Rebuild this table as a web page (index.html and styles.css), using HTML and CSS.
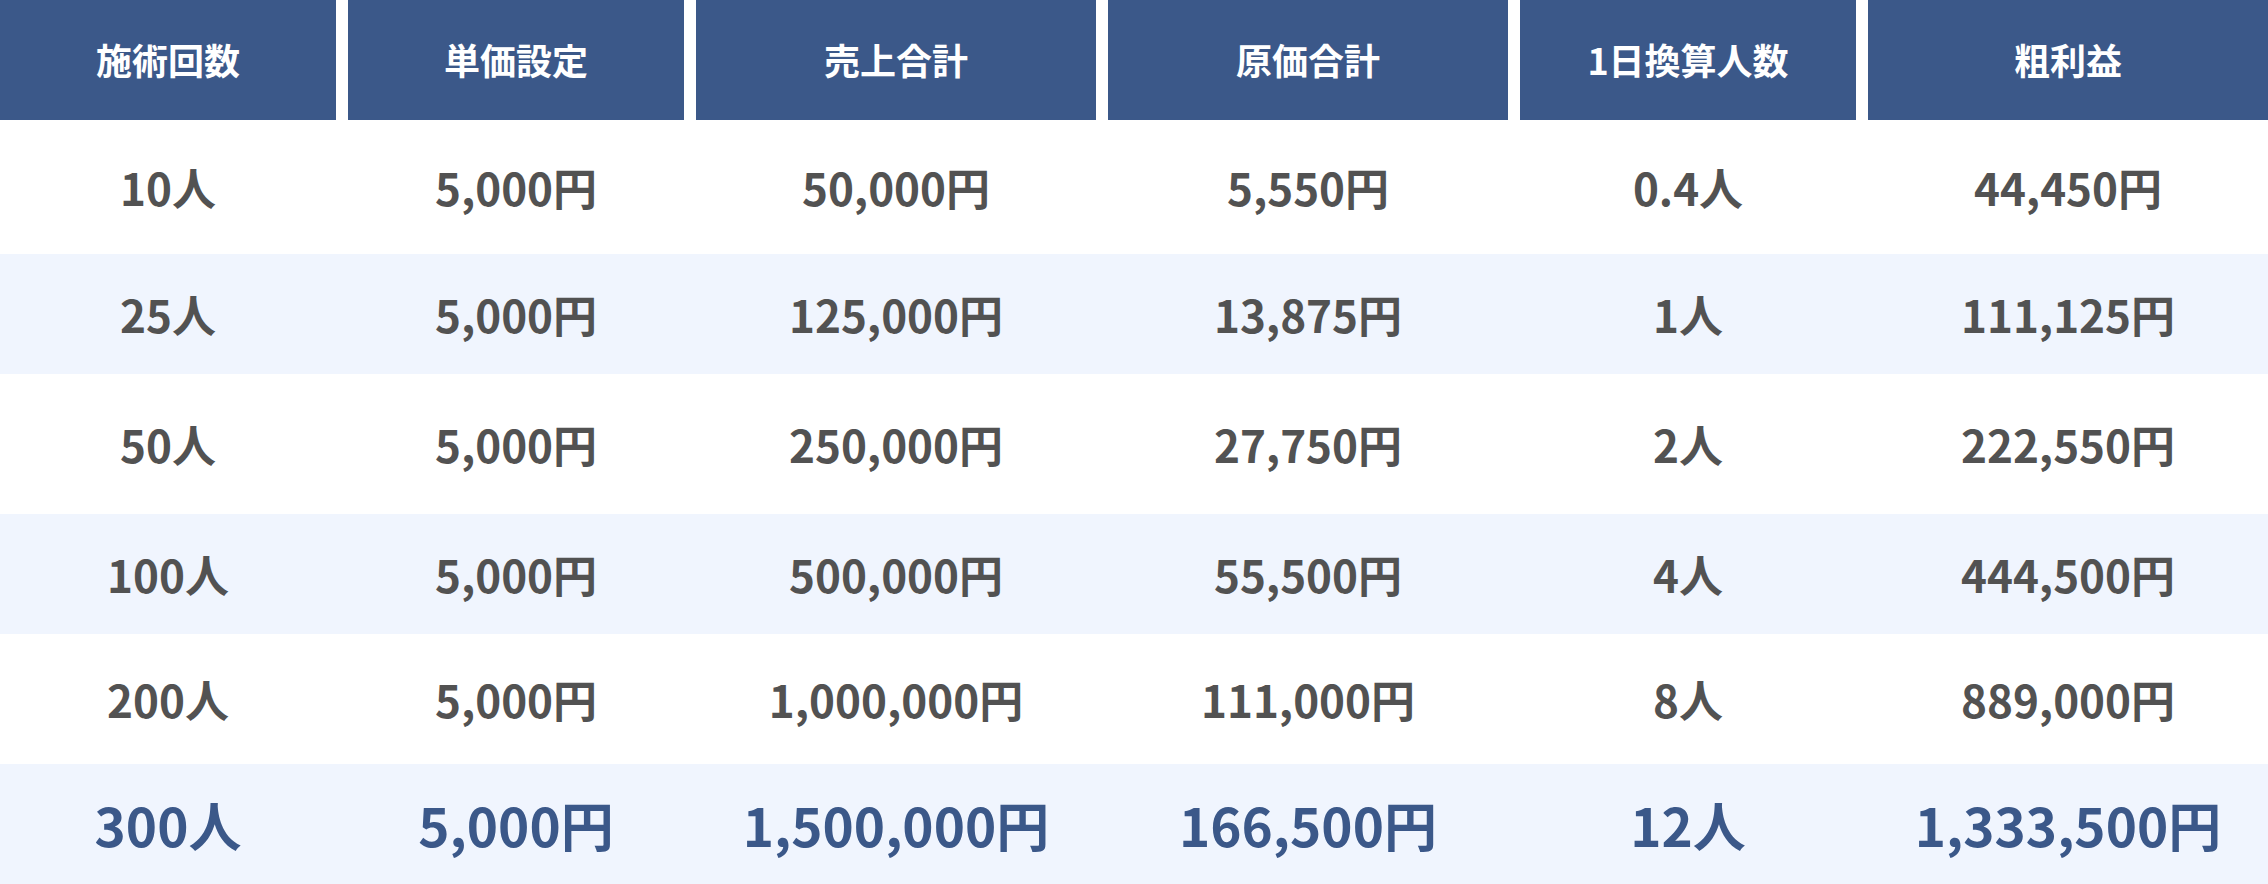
FILE: index.html
```html
<!DOCTYPE html>
<html lang="ja">
<head>
<meta charset="utf-8">
<title>施術回数と粗利益</title>
<link rel="stylesheet" href="styles.css">
</head>
<body>
<div class="table">
  <div class="row head">
    <div class="cell">施術回数</div>
    <div class="cell">単価設定</div>
    <div class="cell">売上合計</div>
    <div class="cell">原価合計</div>
    <div class="cell">1日換算人数</div>
    <div class="cell">粗利益</div>
  </div>
  <div class="row white r1">
    <div class="cell">10人</div>
    <div class="cell">5,000円</div>
    <div class="cell">50,000円</div>
    <div class="cell">5,550円</div>
    <div class="cell">0.4人</div>
    <div class="cell">44,450円</div>
  </div>
  <div class="row tint">
    <div class="cell">25人</div>
    <div class="cell">5,000円</div>
    <div class="cell">125,000円</div>
    <div class="cell">13,875円</div>
    <div class="cell">1人</div>
    <div class="cell">111,125円</div>
  </div>
  <div class="row white r3">
    <div class="cell">50人</div>
    <div class="cell">5,000円</div>
    <div class="cell">250,000円</div>
    <div class="cell">27,750円</div>
    <div class="cell">2人</div>
    <div class="cell">222,550円</div>
  </div>
  <div class="row tint">
    <div class="cell">100人</div>
    <div class="cell">5,000円</div>
    <div class="cell">500,000円</div>
    <div class="cell">55,500円</div>
    <div class="cell">4人</div>
    <div class="cell">444,500円</div>
  </div>
  <div class="row white r5">
    <div class="cell">200人</div>
    <div class="cell">5,000円</div>
    <div class="cell">1,000,000円</div>
    <div class="cell">111,000円</div>
    <div class="cell">8人</div>
    <div class="cell">889,000円</div>
  </div>
  <div class="row tint total">
    <div class="cell">300人</div>
    <div class="cell">5,000円</div>
    <div class="cell">1,500,000円</div>
    <div class="cell">166,500円</div>
    <div class="cell">12人</div>
    <div class="cell">1,333,500円</div>
  </div>
</div>
</body>
</html>
```
FILE: styles.css
```css
html, body {
  margin: 0;
  padding: 0;
  background: #ffffff;
}

.table {
  width: 2268px;
  font-family: "Noto Sans CJK JP", "Noto Sans", sans-serif;
  font-weight: 700;
}

.row {
  display: grid;
  grid-template-columns: 336px 336px 400px 400px 336px 400px;
  column-gap: 12px;
  height: 120px;
}

.cell {
  display: flex;
  align-items: center;
  justify-content: center;
  font-size: 44px;
  color: #525252;
}

.head .cell {
  background: #3b5889;
  color: #ffffff;
  font-size: 36px;
  padding-bottom: 2px;
}

.white { background: #ffffff; }
.tint { background: #f0f5fe; }

.r1 { height: 134px; }
.r3 { height: 140px; }
.r5 { height: 130px; }

.total .cell {
  color: #3b5889;
  font-size: 53px;
}
```
